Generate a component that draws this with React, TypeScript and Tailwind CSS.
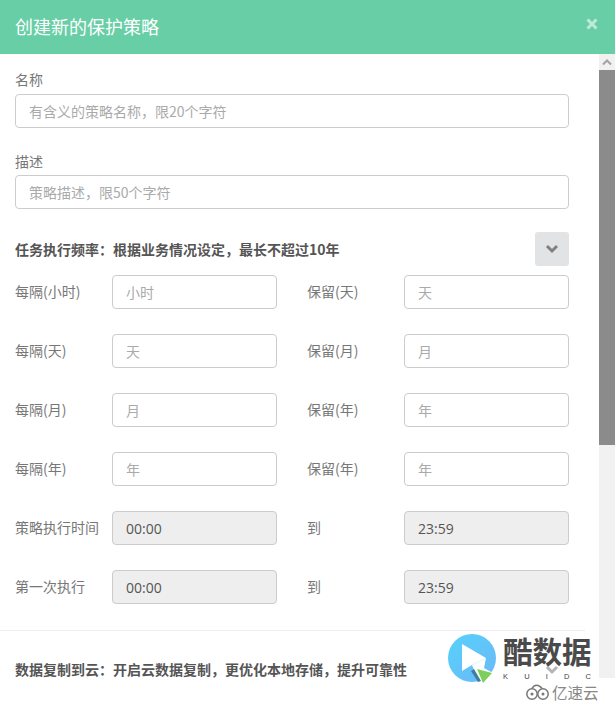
import React from "react";

const font = { fontFamily: '"Noto Sans CJK SC", "Liberation Sans", sans-serif' };

function Field({ label, placeholder, first }: { label: string; placeholder: string; first?: boolean }) {
  return (
    <div className="flex flex-col">
      <div className={`h-[20px] text-[14px] leading-[20px] text-[#777] ${first ? "mb-[5px]" : "mb-[4px]"}`}>{label}</div>
      <input
        readOnly
        placeholder={placeholder}
        className="h-[34px] w-[554px] rounded-[4px] border border-[#ccc] bg-white pl-[13px] pb-[1px] text-[14px] text-[#555] placeholder:text-[#aaa] outline-none"
      />
    </div>
  );
}

function Cell({ label, placeholder, value }: { label: string; placeholder?: string; value?: string }) {
  return (
    <div className="flex items-center h-[34px]">
      <div className="w-[97px] text-[14px] leading-[20px] text-[#777] whitespace-nowrap -mt-[2px]">{label}</div>
      {value ? (
        <div className="h-[34px] w-[165px] rounded-[4px] border border-[#ccc] bg-[#eee] pl-[13px] text-[14px] leading-[33px] text-[#555]" style={{ fontFamily: '"Open Sans", "Liberation Sans", sans-serif' }}>
          {value}
        </div>
      ) : (
        <input
          readOnly
          placeholder={placeholder}
          className="h-[34px] w-[165px] rounded-[4px] border border-[#ccc] bg-white pl-[13px] text-[14px] placeholder:text-[#aaa] outline-none"
        />
      )}
    </div>
  );
}

function Chevron({ color = "#808080" }: { color?: string }) {
  return (
    <svg width="14" height="10" viewBox="0 0 14 10">
      <path d="M2 2 L7 7 L12 2" fill="none" stroke={color} strokeWidth="3" />
    </svg>
  );
}

const rows = [
  ["每隔(小时)", "小时", "保留(天)", "天"],
  ["每隔(天)", "天", "保留(月)", "月"],
  ["每隔(月)", "月", "保留(年)", "年"],
  ["每隔(年)", "年", "保留(年)", "年"],
];

export default function App() {
  return (
    <div className="relative h-[704px] w-[615px] overflow-hidden bg-white" style={font}>
      <div className="flex h-[54px] items-center justify-between bg-[#67cea6] pl-[15px] pr-[17px]">
        <div className="text-[18px] text-white -mt-[1px]">创建新的保护策略</div>
        <svg className="-mt-[6px]" width="12" height="12" viewBox="0 0 12 12">
          <path d="M1.5 1.5 L10.5 10.5 M10.5 1.5 L1.5 10.5" stroke="#bdeAd9" strokeWidth="3" />
        </svg>
      </div>

      <div className="flex h-[650px]">
        <div className="w-[599px] shrink-0">
          <div className="flex flex-col gap-[23px] pl-[15px] pt-[15px]">
            <Field first label="名称" placeholder="有含义的策略名称，限20个字符" />
            <Field label="描述" placeholder="策略描述，限50个字符" />
          </div>

          <div className="mt-[23px] flex h-[34px] w-[569px] items-center justify-between pl-[15px]">
            <div className="text-[14px] font-bold text-[#555]">任务执行频率：根据业务情况设定，最长不超过10年</div>
            <div className="flex h-[34px] w-[34px] items-center justify-center rounded-[3px] bg-[#e2e3e5]">
              <Chevron />
            </div>
          </div>

          <div className="mt-[9px] flex flex-col gap-[25px] pl-[15px]">
            {rows.map((r) => (
              <div key={r[0] + r[2]} className="flex gap-[30px]">
                <Cell label={r[0]} placeholder={r[1]} />
                <Cell label={r[2]} placeholder={r[3]} />
              </div>
            ))}
            <div className="flex gap-[30px]">
              <Cell label="策略执行时间" value="00:00" />
              <Cell label="到" value="23:59" />
            </div>
            <div className="flex gap-[30px]">
              <Cell label="第一次执行" value="00:00" />
              <Cell label="到" value="23:59" />
            </div>
          </div>

          <div className="mt-[26px] h-[1px] w-[585px] bg-[#eee]" />

          <div className="mt-[22px] flex h-[34px] w-[569px] items-center justify-between pl-[15px]">
            <div className="text-[14px] font-bold text-[#555] -mt-[2px]">数据复制到云：开启云数据复制，更优化本地存储，提升可靠性</div>
            <div className="flex h-[34px] w-[34px] items-center justify-center rounded-[3px]">
              <Chevron color="#b5b5b5" />
            </div>
          </div>
        </div>

        <div className="flex h-[624px] w-[16px] flex-col bg-[#f1f1f1]">
          <div className="flex h-[16px] items-center justify-center">
            <svg width="10" height="7" viewBox="0 0 10 7">
              <path d="M1 5.5 L5 1.5 L9 5.5" fill="none" stroke="#a3a3a3" strokeWidth="2" />
            </svg>
          </div>
          <div className="h-[375px] bg-[#8b8b8b]" />
        </div>
      </div>

      {/* watermark over the page */}
      <div className="absolute left-[448px] top-[634px] h-[70px] w-[167px]">
        <svg className="absolute left-0 top-0" width="54" height="54" viewBox="0 0 54 54">
          <defs>
            <linearGradient id="wmBlue" x1="0" y1="0" x2="1" y2="1">
              <stop offset="0" stopColor="#55d2fb" />
              <stop offset="1" stopColor="#6cb8f7" />
            </linearGradient>
          </defs>
          <circle cx="24" cy="24" r="24" fill="url(#wmBlue)" />
          <path d="M14 10 L38 24 L24 31 L14 37 Z" fill="#fff" />
          <path d="M24 31 L38 24 L36 34 L45 39 L36 48 L31 48 Z" fill="#fff" />
          <path d="M29 35 L44 39 L35 49 Z" fill="#7bcf5a" />
          <path d="M23 37 L26 35 L33 47 L30 48 Z" fill="#3f7f99" />
        </svg>
        <div className="absolute left-[55px] top-[1px] whitespace-nowrap text-[29.5px] font-bold leading-[30px] text-[#4a4a4a]" style={{ fontFamily: '"Noto Sans CJK SC", serif' }}>
          酷数据
        </div>
        <div className="absolute left-[55px] top-[39px] flex w-[88px] justify-between text-[7.5px] leading-[8px] text-[#444]" style={{ fontFamily: '"Liberation Sans", sans-serif' }}>
          <span>K</span>
          <span>U</span>
          <span>I</span>
          <span>D</span>
          <span>C</span>
        </div>
        <svg className="absolute left-[77px] top-[49px]" width="26" height="18" viewBox="0 0 26 18">
          <circle cx="7" cy="11" r="5.2" fill="none" stroke="#777" strokeWidth="1.5" />
          <circle cx="18" cy="11" r="5.2" fill="none" stroke="#777" strokeWidth="1.5" />
          <circle cx="7" cy="11" r="1.5" fill="#777" />
          <circle cx="18" cy="11" r="1.5" fill="#777" />
          <path d="M7 5.5 C9 1 14 1 17 5.5" fill="none" stroke="#777" strokeWidth="1.5" />
        </svg>
        <div className="absolute left-[104px] top-[47px] whitespace-nowrap text-[15.5px] leading-[22px] text-[#888]">亿速云</div>
      </div>
    </div>
  );
}
